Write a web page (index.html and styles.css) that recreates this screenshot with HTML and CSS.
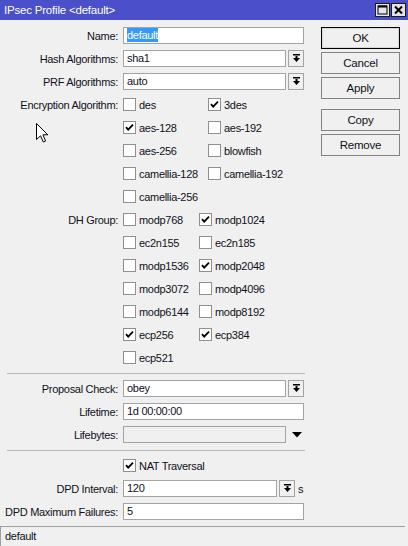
FILE: index.html
```html
<!DOCTYPE html>
<html>
<head>
    <meta charset="UTF-8">
    <title>IPsec Profile &lt;default&gt;</title>
    <link rel="stylesheet" href="styles.css">
</head>
<body>
    <div class="window">
        <div class="titlebar">
            <span class="title">IPsec Profile &lt;default&gt;</span>
            <div class="title-btns">
                <span class="tbtn">
                    <svg width="11" height="10" viewBox="0 0 11 10"><rect x="1" y="1" width="9" height="8" fill="none" stroke="#000" stroke-width="1"/><rect x="1" y="0.5" width="9" height="2" fill="#000"/></svg>
                </span>
                <span class="tbtn">
                    <svg width="11" height="10" viewBox="0 0 11 10"><path d="M2 1.5 L9 8.5 M9 1.5 L2 8.5" stroke="#000" stroke-width="2"/></svg>
                </span>
            </div>
        </div>

        <div class="main">
            <div class="form">
                <div class="row">
                    <span class="lbl">Name:</span>
                    <div class="input"><span class="selected">default</span></div>
                </div>
                <div class="row">
                    <span class="lbl">Hash Algorithms:</span>
                    <div class="combo">
                        <div class="input">sha1</div>
                        <span class="drop"><svg width="9" height="9" viewBox="0 0 9 9"><rect x="1" y="0" width="7" height="1.5" fill="#000"/><rect x="3.5" y="2" width="2" height="2" fill="#000"/><path d="M1 4 H8 L4.5 8 Z" fill="#000"/></svg></span>
                    </div>
                </div>
                <div class="row">
                    <span class="lbl">PRF Algorithms:</span>
                    <div class="combo">
                        <div class="input">auto</div>
                        <span class="drop"><svg width="9" height="9" viewBox="0 0 9 9"><rect x="1" y="0" width="7" height="1.5" fill="#000"/><rect x="3.5" y="2" width="2" height="2" fill="#000"/><path d="M1 4 H8 L4.5 8 Z" fill="#000"/></svg></span>
                    </div>
                </div>

                <!-- encryption algorithms -->
                <div class="row">
                    <span class="lbl">Encryption Algorithm:</span>
                    <div class="checks enc">
                        <span class="chk"><i class="box"></i>des</span>
                        <span class="chk on"><i class="box"></i>3des</span>
                    </div>
                </div>
                <div class="row">
                    <span class="lbl"></span>
                    <div class="checks enc">
                        <span class="chk on"><i class="box"></i>aes-128</span>
                        <span class="chk"><i class="box"></i>aes-192</span>
                    </div>
                </div>
                <div class="row">
                    <span class="lbl"></span>
                    <div class="checks enc">
                        <span class="chk"><i class="box"></i>aes-256</span>
                        <span class="chk"><i class="box"></i>blowfish</span>
                    </div>
                </div>
                <div class="row">
                    <span class="lbl"></span>
                    <div class="checks enc">
                        <span class="chk"><i class="box"></i>camellia-128</span>
                        <span class="chk"><i class="box"></i>camellia-192</span>
                    </div>
                </div>
                <div class="row">
                    <span class="lbl"></span>
                    <div class="checks enc">
                        <span class="chk"><i class="box"></i>camellia-256</span>
                    </div>
                </div>

                <!-- DH groups -->
                <div class="row">
                    <span class="lbl">DH Group:</span>
                    <div class="checks dh">
                        <span class="chk"><i class="box"></i>modp768</span>
                        <span class="chk on"><i class="box"></i>modp1024</span>
                    </div>
                </div>
                <div class="row">
                    <span class="lbl"></span>
                    <div class="checks dh">
                        <span class="chk"><i class="box"></i>ec2n155</span>
                        <span class="chk"><i class="box"></i>ec2n185</span>
                    </div>
                </div>
                <div class="row">
                    <span class="lbl"></span>
                    <div class="checks dh">
                        <span class="chk"><i class="box"></i>modp1536</span>
                        <span class="chk on"><i class="box"></i>modp2048</span>
                    </div>
                </div>
                <div class="row">
                    <span class="lbl"></span>
                    <div class="checks dh">
                        <span class="chk"><i class="box"></i>modp3072</span>
                        <span class="chk"><i class="box"></i>modp4096</span>
                    </div>
                </div>
                <div class="row">
                    <span class="lbl"></span>
                    <div class="checks dh">
                        <span class="chk"><i class="box"></i>modp6144</span>
                        <span class="chk"><i class="box"></i>modp8192</span>
                    </div>
                </div>
                <div class="row">
                    <span class="lbl"></span>
                    <div class="checks dh">
                        <span class="chk on"><i class="box"></i>ecp256</span>
                        <span class="chk on"><i class="box"></i>ecp384</span>
                    </div>
                </div>
                <div class="row">
                    <span class="lbl"></span>
                    <div class="checks dh">
                        <span class="chk"><i class="box"></i>ecp521</span>
                    </div>
                </div>

                <div class="sep"></div>

                <div class="row">
                    <span class="lbl">Proposal Check:</span>
                    <div class="combo">
                        <div class="input">obey</div>
                        <span class="drop"><svg width="9" height="9" viewBox="0 0 9 9"><rect x="1" y="0" width="7" height="1.5" fill="#000"/><rect x="3.5" y="2" width="2" height="2" fill="#000"/><path d="M1 4 H8 L4.5 8 Z" fill="#000"/></svg></span>
                    </div>
                </div>
                <div class="row">
                    <span class="lbl">Lifetime:</span>
                    <div class="input">1d 00:00:00</div>
                </div>
                <div class="row">
                    <span class="lbl">Lifebytes:</span>
                    <div class="combo">
                        <div class="input disabled"></div>
                        <span class="expand"><svg width="10" height="6" viewBox="0 0 10 6"><path d="M0 0 H10 L5 5.5 Z" fill="#000"/></svg></span>
                    </div>
                </div>

                <div class="sep"></div>

                <div class="row">
                    <span class="lbl"></span>
                    <div class="checks">
                        <span class="chk on"><i class="box"></i>NAT Traversal</span>
                    </div>
                </div>
                <div class="row">
                    <span class="lbl">DPD Interval:</span>
                    <div class="combo short">
                        <div class="input">120</div>
                        <span class="drop"><svg width="9" height="9" viewBox="0 0 9 9"><rect x="1" y="0" width="7" height="1.5" fill="#000"/><rect x="3.5" y="2" width="2" height="2" fill="#000"/><path d="M1 4 H8 L4.5 8 Z" fill="#000"/></svg></span>
                        <span class="unit">s</span>
                    </div>
                </div>
                <div class="row">
                    <span class="lbl">DPD Maximum Failures:</span>
                    <div class="input">5</div>
                </div>
            </div>

            <div class="actions">
                <button class="btn default">OK</button>
                <button class="btn">Cancel</button>
                <button class="btn">Apply</button>
                <button class="btn gap">Copy</button>
                <button class="btn">Remove</button>
            </div>
        </div>

        <div class="statusbar">default</div>
    </div>

    <!-- mouse pointer -->
    <svg class="pointer" width="13" height="20" viewBox="0 0 13 20">
        <path d="M0.5 0.5 L0.5 16.5 L4.5 12.8 L7.3 19 L9.6 18 L6.9 11.8 L11.8 11.8 Z" fill="#fff" stroke="#000" stroke-width="1" stroke-linejoin="miter"/>
    </svg>
</body>
</html>
```

FILE: styles.css
```css
* {
    margin: 0;
    padding: 0;
    box-sizing: border-box;
}

body {
    width: 408px;
    height: 546px;
    background: #f0f0f0;
    font-family: 'Liberation Sans', Arial, sans-serif;
    font-size: 11px;
    letter-spacing: -0.3px;
    color: #101020;
    overflow: hidden;
    position: relative;
}

.window {
    height: 546px;
    display: flex;
    flex-direction: column;
}

/* title bar */
.titlebar {
    height: 20px;
    background: #4b4fc9;
    color: #fff;
    display: flex;
    align-items: center;
    justify-content: space-between;
    padding: 0 2px 0 4px;
    flex-shrink: 0;
}

.title {
    font-size: 11.5px;
    letter-spacing: -0.2px;
}

.title-btns {
    display: flex;
    gap: 1px;
}

.tbtn {
    width: 15px;
    height: 14px;
    background: #e4e4e4;
    border: 1px solid #1a1a1a;
    display: flex;
    align-items: center;
    justify-content: center;
}

/* main area */
.main {
    flex: 1;
    display: flex;
    padding-top: 7px;
}

.form {
    width: 304px;
    display: flex;
    flex-direction: column;
    gap: 6px;
}

.row {
    display: grid;
    grid-template-columns: 118px 181px;
    column-gap: 5px;
    height: 17px;
    align-items: center;
}

.lbl {
    text-align: right;
    white-space: nowrap;
}

.input {
    height: 17px;
    background: #fff;
    border: 1px solid #a3a3a3;
    padding: 0 3px;
    line-height: 15px;
    white-space: nowrap;
    overflow: hidden;
}

.input.disabled {
    background: #f0f0f0;
}

.selected {
    background: #3399ff;
    color: #fff;
    padding: 1px 0 1px 0;
}

.combo {
    display: flex;
    align-items: center;
    gap: 2px;
}

.combo .input {
    width: 163px;
}

.combo.short .input {
    width: 154px;
}

.drop {
    width: 16px;
    height: 17px;
    border: 1px solid #a3a3a3;
    background: #f0f0f0;
    display: flex;
    align-items: center;
    justify-content: center;
}

.expand {
    display: flex;
    margin-left: 4px;
}

.unit {
    margin-left: 1px;
}

/* checkbox rows */
.checks {
    display: flex;
}

.chk {
    display: flex;
    align-items: center;
    gap: 3px;
    white-space: nowrap;
}

.enc .chk {
    width: 85px;
}

.dh .chk {
    width: 76px;
}

.box {
    width: 13px;
    height: 13px;
    background: #fff;
    border: 1px solid #8e8f8f;
    flex-shrink: 0;
}

.chk.on .box {
    background: #fff url("data:image/svg+xml,%3Csvg xmlns='http://www.w3.org/2000/svg' width='11' height='11' viewBox='0 0 11 11'%3E%3Cpath d='M2 5.2 L4.2 7.6 L9 2.6' fill='none' stroke='%23000' stroke-width='1.8'/%3E%3C/svg%3E") no-repeat center;
}

.sep {
    height: 1px;
    margin: 1px 0 0 7px;
    width: 298px;
    background: #b9b9b9;
}

/* side buttons */
.actions {
    margin-left: 17px;
    width: 79px;
    display: flex;
    flex-direction: column;
    gap: 3px;
}

.btn {
    height: 22px;
    background: #f0f0f0;
    border: 1px solid #838383;
    font-family: inherit;
    font-size: 11.5px;
    letter-spacing: -0.2px;
    color: #101020;
}

.btn.default {
    border: 1px solid #000;
    box-shadow: inset 0 0 0 1px #d8d8d8;
}

.btn.gap {
    margin-top: 7px;
}

/* status bar */
.statusbar {
    height: 20px;
    border-top: 1px solid #a0a0a0;
    border-left: 1px solid #a0a0a0;
    padding: 0 4px;
    line-height: 19px;
    flex-shrink: 0;
    margin-right: 3px;
}

.pointer {
    position: absolute;
    left: 36px;
    top: 123px;
}
```
